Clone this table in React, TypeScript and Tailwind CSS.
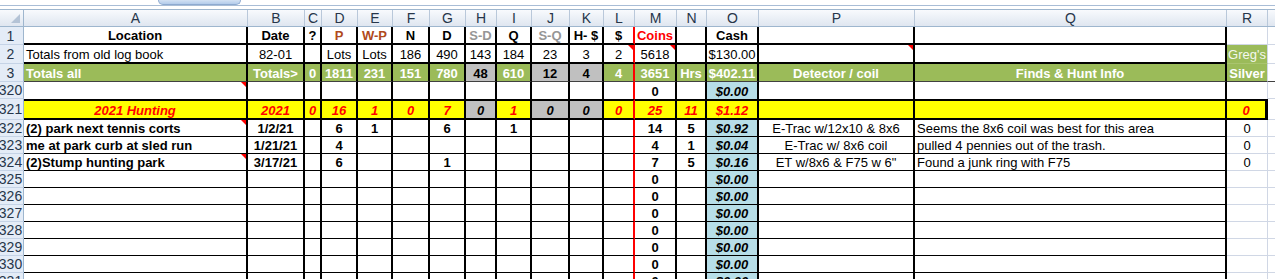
import { twMerge } from "tailwind-merge"

type Cell = { t?: string; cls?: string; note?: boolean }
type Row = { n: string; h: string; b: string; cls?: string; cells: Record<string, Cell | string> }

const BLACK = "border-r-2 border-r-black"

const COLS = [
  { k: "A", w: "w-[224px]", r: BLACK },
  { k: "B", w: "w-[57px]", r: BLACK },
  { k: "C", w: "w-[17px]", r: BLACK },
  { k: "D", w: "w-[36px]", r: BLACK },
  { k: "E", w: "w-[35px]", r: BLACK },
  { k: "F", w: "w-[37px]", r: BLACK },
  { k: "G", w: "w-[36px]", r: BLACK },
  { k: "H", w: "w-[31px]", r: BLACK },
  { k: "I", w: "w-[35px]", r: BLACK },
  { k: "J", w: "w-[38px]", r: BLACK },
  { k: "K", w: "w-[34px]", r: BLACK },
  { k: "L", w: "w-[31px]", r: "border-r-2 border-r-[#ff0000]" },
  { k: "M", w: "w-[42px]", r: BLACK },
  { k: "N", w: "w-[30px]", r: BLACK },
  { k: "O", w: "w-[52px]", r: BLACK },
  { k: "P", w: "w-[156px]", r: BLACK },
  { k: "Q", w: "w-[312px]", r: BLACK },
  { k: "R", w: "w-[41px]", r: "border-r border-r-[#d0d7e5]" },
]

const LEFT = "justify-start pl-[2px]"
const GRAY = "bg-[#c0c0c0] text-black"
const BROWN = "text-[#b04a1c]"
const LIGHT_B = "border-b border-b-[#d0d7e5]"
const CASH = "bg-[#b7dee8] font-bold italic"

const empty = (n: string): Row => ({
  n, h: "h-[17px]", b: "border-b border-b-black",
  cells: { M: { t: "0", cls: "font-bold" }, O: { t: "$0.00", cls: CASH }, R: { cls: LIGHT_B } },
})

const ROWS: Row[] = [
  {
    n: "1", h: "h-[18px]", b: "border-b-2 border-b-black", cls: "font-bold",
    cells: {
      A: "Location", B: "Date", C: "?", D: { t: "P", cls: BROWN }, E: { t: "W-P", cls: BROWN }, F: "N", G: "D",
      H: { t: "S-D", cls: "text-[#969696]" }, I: "Q", J: { t: "S-Q", cls: "text-[#969696]" }, K: "H- $", L: "$",
      M: { t: "Coins", cls: "text-[#ff0000]" }, O: "Cash", R: { cls: LIGHT_B },
    },
  },
  {
    n: "2", h: "h-[19px]", b: "border-b-2 border-b-black",
    cells: {
      A: { t: "Totals from old log book", cls: LEFT }, B: "82-01", D: "Lots", E: "Lots", F: "186", G: "490", H: "143",
      I: "184", J: "23", K: "3", L: { t: "2", note: true }, M: { t: "5618", note: true }, O: "$130.00", P: { note: true },
      R: { t: "Greg's", cls: "bg-[#9bbb59] text-[#f4f7ee] border-b border-b-[#a9c46e]" },
    },
  },
  {
    n: "3", h: "h-[18px]", b: "border-b border-b-[#404040]", cls: "bg-[#9bbb59] text-white font-bold",
    cells: {
      A: { t: "Totals all", cls: LEFT }, B: "Totals>", C: "0", D: "1811", E: "231", F: "151", G: "780",
      H: { t: "48", cls: GRAY }, I: "610", J: { t: "12", cls: GRAY }, K: { t: "4", cls: GRAY }, L: "4", M: "3651",
      N: "Hrs", O: "$402.11", P: "Detector / coil", Q: "Finds & Hunt Info", R: "Silver",
    },
  },
  {
    n: "320", h: "h-[17px]", b: "border-b-0",
    cells: { A: { note: true }, M: { t: "0", cls: "font-bold" }, O: { t: "$0.00", cls: CASH } },
  },
  {
    n: "321", h: "h-[21px]", b: "border-y-2 border-y-black", cls: "bg-[#ffff00] text-[#ff0000] font-bold italic",
    cells: {
      A: "2021 Hunting", B: "2021", C: "0", D: "16", E: "1", F: "0", G: "7", H: { t: "0", cls: GRAY }, I: "1",
      J: { t: "0", cls: GRAY }, K: { t: "0", cls: GRAY }, L: "0", M: "25", N: "11", O: "$1.12",
      R: { t: "0", cls: "border-r-[3px] border-r-black" },
    },
  },
  {
    n: "322", h: "h-[17px]", b: "border-b border-b-black", cls: "font-bold",
    cells: {
      A: { t: "(2) park next tennis corts", cls: LEFT, note: true }, B: "1/2/21", D: "6", E: "1", G: "6", I: "1",
      M: "14", N: "5", O: { t: "$0.92", cls: CASH }, P: { t: "E-Trac w/12x10 & 8x6", cls: "font-normal" },
      Q: { t: "Seems the 8x6 coil was best for this area", cls: LEFT + " font-normal" },
      R: { t: "0", cls: LIGHT_B + " font-normal" },
    },
  },
  {
    n: "323", h: "h-[17px]", b: "border-b border-b-black", cls: "font-bold",
    cells: {
      A: { t: "me at park curb at sled run", cls: LEFT }, B: "1/21/21", D: "4", M: "4", N: "1",
      O: { t: "$0.04", cls: CASH }, P: { t: "E-Trac w/ 8x6 coil", cls: "font-normal" },
      Q: { t: "pulled 4 pennies out of the trash.", cls: LEFT + " font-normal" },
      R: { t: "0", cls: LIGHT_B + " font-normal" },
    },
  },
  {
    n: "324", h: "h-[17px]", b: "border-b border-b-black", cls: "font-bold",
    cells: {
      A: { t: "(2)Stump hunting park", cls: LEFT, note: true }, B: "3/17/21", D: "6", G: "1", M: "7", N: "5",
      O: { t: "$0.16", cls: CASH }, P: { t: "ET w/8x6 & F75 w 6\"", cls: "font-normal" },
      Q: { t: "Found a junk ring with F75", cls: LEFT + " font-normal" },
      R: { t: "0", cls: LIGHT_B + " font-normal" },
    },
  },
  ...["325", "326", "327", "328", "329", "330", "331"].map(empty),
]

function SheetCell({ col, row }: { col: (typeof COLS)[number]; row: Row }) {
  const raw = row.cells[col.k]
  const c: Cell = typeof raw === "string" ? { t: raw } : raw ?? {}
  return (
    <div className={twMerge("relative flex h-full shrink-0 items-center justify-center overflow-hidden whitespace-nowrap bg-white pt-px leading-none text-black", col.w, col.r, row.b, row.cls, c.cls)}>
      {c.t}
      {c.note && <span className="absolute right-0 top-0 h-0 w-0 border-l-[5px] border-t-[5px] border-l-transparent border-t-[#ff0000]" />}
    </div>
  )
}

export default function App() {
  return (
    <div className="h-[279px] w-[1275px] overflow-hidden bg-white font-['Liberation_Sans',Arial,sans-serif] text-[13px]">
      {/* ribbon remains */}
      <div className="flex h-[5px]">
        <div className="w-[158px]" />
        <div className="h-full w-[83px] rounded-b-[6px] border border-t-0 border-[#8eaad0] bg-linear-to-b from-[#d3e1f3] to-[#b3cbea]" />
      </div>
      <div className="h-px bg-[#a9bdd6]" />
      <div className="h-[3px] bg-white" />

      {/* column letters */}
      <div className="flex h-[18px] border-y border-y-[#9eb6ce] bg-linear-to-b from-[#f8fafd] to-[#dfe6f0] text-[14px] leading-none text-[#27364a]">
        <div className="flex w-[24px] shrink-0 items-end justify-end border-r border-r-[#9eb6ce] p-[3px]">
          <svg width="9" height="9" viewBox="0 0 9 9"><polygon points="9,0 9,9 0,9" fill="#b4c3d6" /></svg>
        </div>
        {COLS.map(col => (
          <div key={col.k} className={twMerge("flex h-full shrink-0 items-center justify-center border-r border-r-[#b9c8da]", col.w)}>{col.k}</div>
        ))}
        <div className="flex-1" />
      </div>

      {ROWS.map(row => (
        <div key={row.n} className={twMerge("flex", row.h)}>
          <div className="flex h-full w-[24px] shrink-0 items-center justify-center border-r border-b border-r-[#9eb6ce] border-b-[#c5d3e6] bg-[#e4ecf7] pr-[2px] text-[14px] leading-none text-[#27364a]">{row.n}</div>
          {COLS.map(col => <SheetCell key={col.k} col={col} row={row} />)}
          <div className={twMerge("h-full flex-1", row.n === "3" ? "border-b border-b-[#404040]" : LIGHT_B)} />
        </div>
      ))}
    </div>
  )
}
